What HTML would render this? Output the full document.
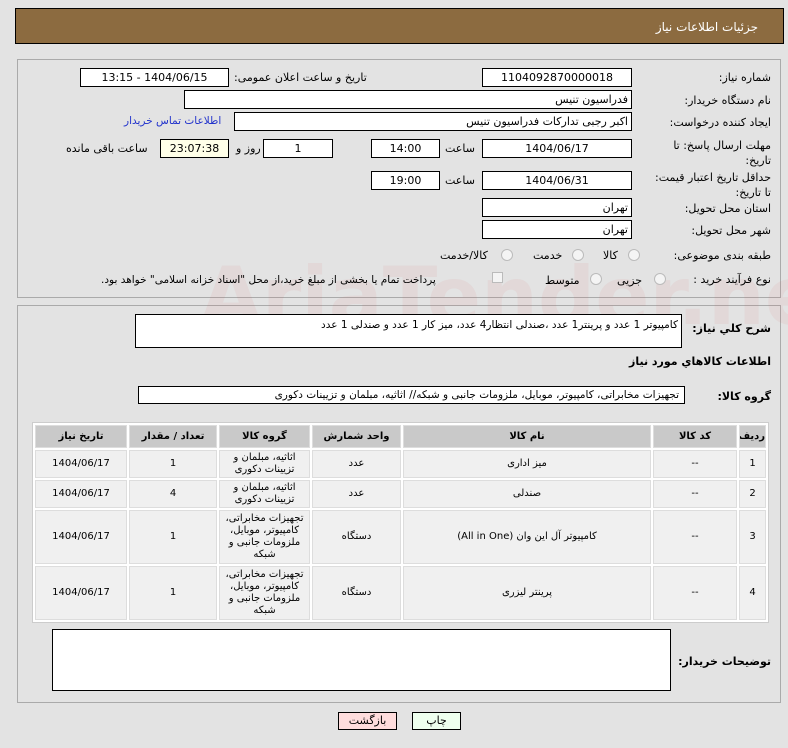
<!DOCTYPE html>
<html><head><meta charset="utf-8">
<style>
*{margin:0;padding:0;box-sizing:border-box}
body{width:788px;height:748px;background:#e3e3e3;font-family:"DejaVu Sans","Liberation Sans",sans-serif;font-size:11px;color:#000;position:relative;overflow:hidden;direction:rtl}
.a{position:absolute;white-space:nowrap}
.box{position:absolute;background:#fff;border:1px solid #000;text-align:center;line-height:17px;font-size:11px;overflow:hidden}
.lbl{position:absolute;white-space:nowrap;font-size:11px}
.b{font-weight:bold}
table{position:absolute;left:32px;top:422px;width:737px;border-collapse:separate;border-spacing:2px;background:#fff;border:1px solid #ccc;font-size:10px;line-height:12px;table-layout:fixed}
td,th{text-align:center;background:#f0f0f0;border:1px solid #ddd;overflow:hidden;padding:0}
th{background:#c9c9c9;height:23px;font-size:10px}
.rad{position:absolute;width:12px;height:12px;border-radius:50%;border:1px solid #bbb;background:#f4f4f4}
</style></head><body>
<div class="a" style="left:15px;top:8px;width:769px;height:36px;background:#8c6b40;border:1px solid #000"></div>
<div class="lbl" style="right:30px;top:20px;color:#fff;font-size:12px">جزئیات اطلاعات نیاز</div>

<div class="a" style="left:17px;top:59px;width:764px;height:239px;border:1px solid #aaa;background:#e3e3e3"></div>
<div class="a" style="left:17px;top:305px;width:764px;height:398px;border:1px solid #aaa;background:#e3e3e3"></div>

<div class="a" style="left:200px;top:250px;font-size:80px;font-weight:bold;color:rgba(215,90,90,0.08);direction:ltr">AriaTender.net</div>

<div class="lbl" style="right:17px;top:71px">شماره نیاز:</div>
<div class="box" style="left:482px;top:68px;width:150px;height:19px">1104092870000018</div>
<div class="lbl" style="left:234px;top:71px">تاریخ و ساعت اعلان عمومی:</div>
<div class="box" style="left:80px;top:68px;width:149px;height:19px">1404/06/15 - 13:15</div>

<div class="lbl" style="right:17px;top:94px">نام دستگاه خریدار:</div>
<div class="box" style="left:184px;top:90px;width:448px;height:19px;text-align:right;padding-right:3px">فدراسیون تنیس</div>

<div class="lbl" style="right:17px;top:116px">ایجاد کننده درخواست:</div>
<div class="box" style="left:234px;top:112px;width:398px;height:19px;text-align:right;padding-right:3px">اکبر رجبی تدارکات فدراسیون تنیس</div>
<div class="lbl" style="left:124px;top:115px;color:#2233cc;font-size:10.5px">اطلاعات تماس خریدار</div>

<div class="lbl" style="right:17px;top:138px;line-height:15px;text-align:right">مهلت ارسال پاسخ: تا<br>تاریخ:</div>
<div class="box" style="left:482px;top:139px;width:150px;height:19px">1404/06/17</div>
<div class="lbl" style="left:445px;top:142px">ساعت</div>
<div class="box" style="left:371px;top:139px;width:69px;height:19px">14:00</div>
<div class="box" style="left:263px;top:139px;width:70px;height:19px">1</div>
<div class="lbl" style="left:236px;top:142px">روز و</div>
<div class="box" style="left:160px;top:139px;width:69px;height:19px;background:#ffffe8">23:07:38</div>
<div class="lbl" style="left:66px;top:142px">ساعت باقی مانده</div>

<div class="lbl" style="right:17px;top:170px;line-height:15px;text-align:right">حداقل تاریخ اعتبار قیمت:<br>تا تاریخ:</div>
<div class="box" style="left:482px;top:171px;width:150px;height:19px">1404/06/31</div>
<div class="lbl" style="left:445px;top:174px">ساعت</div>
<div class="box" style="left:371px;top:171px;width:69px;height:19px">19:00</div>

<div class="lbl" style="right:17px;top:202px">استان محل تحویل:</div>
<div class="box" style="left:482px;top:198px;width:150px;height:19px;text-align:right;padding-right:3px">تهران</div>
<div class="lbl" style="right:17px;top:224px">شهر محل تحویل:</div>
<div class="box" style="left:482px;top:220px;width:150px;height:19px;text-align:right;padding-right:3px">تهران</div>

<div class="lbl" style="right:17px;top:249px">طبقه بندی موضوعی:</div>
<div class="rad" style="left:628px;top:249px"></div><div class="lbl" style="left:603px;top:249px">کالا</div>
<div class="rad" style="left:572px;top:249px"></div><div class="lbl" style="left:533px;top:249px">خدمت</div>
<div class="rad" style="left:501px;top:249px"></div><div class="lbl" style="left:440px;top:249px">کالا/خدمت</div>

<div class="lbl" style="right:17px;top:273px">نوع فرآیند خرید :</div>
<div class="rad" style="left:654px;top:273px"></div><div class="lbl" style="left:617px;top:274px">جزیی</div>
<div class="rad" style="left:590px;top:273px"></div><div class="lbl" style="left:545px;top:274px">متوسط</div>
<div class="a" style="left:492px;top:272px;width:11px;height:11px;border:1px solid #bbb;background:#f4f4f4"></div>
<div class="lbl" style="left:101px;top:274px;font-size:10.5px">پرداخت تمام یا بخشی از مبلغ خرید،از محل "اسناد خزانه اسلامی" خواهد بود.</div>

<div class="lbl b" style="right:17px;top:322px">شرح کلي نياز:</div>
<div class="box" style="left:135px;top:314px;width:547px;height:34px;text-align:right;padding-right:3px;line-height:20px;font-size:10.5px">کامپیوتر 1 عدد و پرینتر1 عدد ،صندلی انتظار4 عدد، میز کار 1 عدد و صندلی 1 عدد</div>
<div class="lbl b" style="right:17px;top:355px">اطلاعات کالاهاي مورد نياز</div>
<div class="lbl b" style="right:17px;top:390px">گروه کالا:</div>
<div class="box" style="left:138px;top:386px;width:547px;height:18px;text-align:right;padding-right:5px;line-height:16px;font-size:10.5px">تجهیزات مخابراتی، کامپیوتر، موبایل، ملزومات جانبی و شبکه// اثاثیه، مبلمان و تزیینات دکوری</div>

<table>
<colgroup><col style="width:27px"><col style="width:84px"><col style="width:248px"><col style="width:89px"><col style="width:91px"><col style="width:88px"><col style="width:92px"></colgroup>
<tr><th>ردیف</th><th>کد کالا</th><th>نام کالا</th><th>واحد شمارش</th><th>گروه کالا</th><th>تعداد / مقدار</th><th>تاریخ نیاز</th></tr>
<tr style="height:28px"><td>1</td><td>--</td><td>میز اداری</td><td>عدد</td><td>اثاثیه، مبلمان و تزیینات دکوری</td><td>1</td><td>1404/06/17</td></tr>
<tr style="height:28px"><td>2</td><td>--</td><td>صندلی</td><td>عدد</td><td>اثاثیه، مبلمان و تزیینات دکوری</td><td>4</td><td>1404/06/17</td></tr>
<tr style="height:54px"><td>3</td><td>--</td><td>کامپیوتر آل این وان (All in One)</td><td>دستگاه</td><td>تجهیزات مخابراتی، کامپیوتر، موبایل، ملزومات جانبی و شبکه</td><td>1</td><td>1404/06/17</td></tr>
<tr style="height:54px"><td>4</td><td>--</td><td>پرینتر لیزری</td><td>دستگاه</td><td>تجهیزات مخابراتی، کامپیوتر، موبایل، ملزومات جانبی و شبکه</td><td>1</td><td>1404/06/17</td></tr>
</table>

<div class="lbl b" style="right:17px;top:655px">توضیحات خریدار:</div>
<div class="box" style="left:52px;top:629px;width:619px;height:62px"></div>

<div class="a" style="left:338px;top:712px;width:59px;height:18px;background:#fdd;border:1px solid #000;text-align:center;line-height:16px">بازگشت</div>
<div class="a" style="left:412px;top:712px;width:49px;height:18px;background:#efe;border:1px solid #000;text-align:center;line-height:16px">چاپ</div>
</body></html>
